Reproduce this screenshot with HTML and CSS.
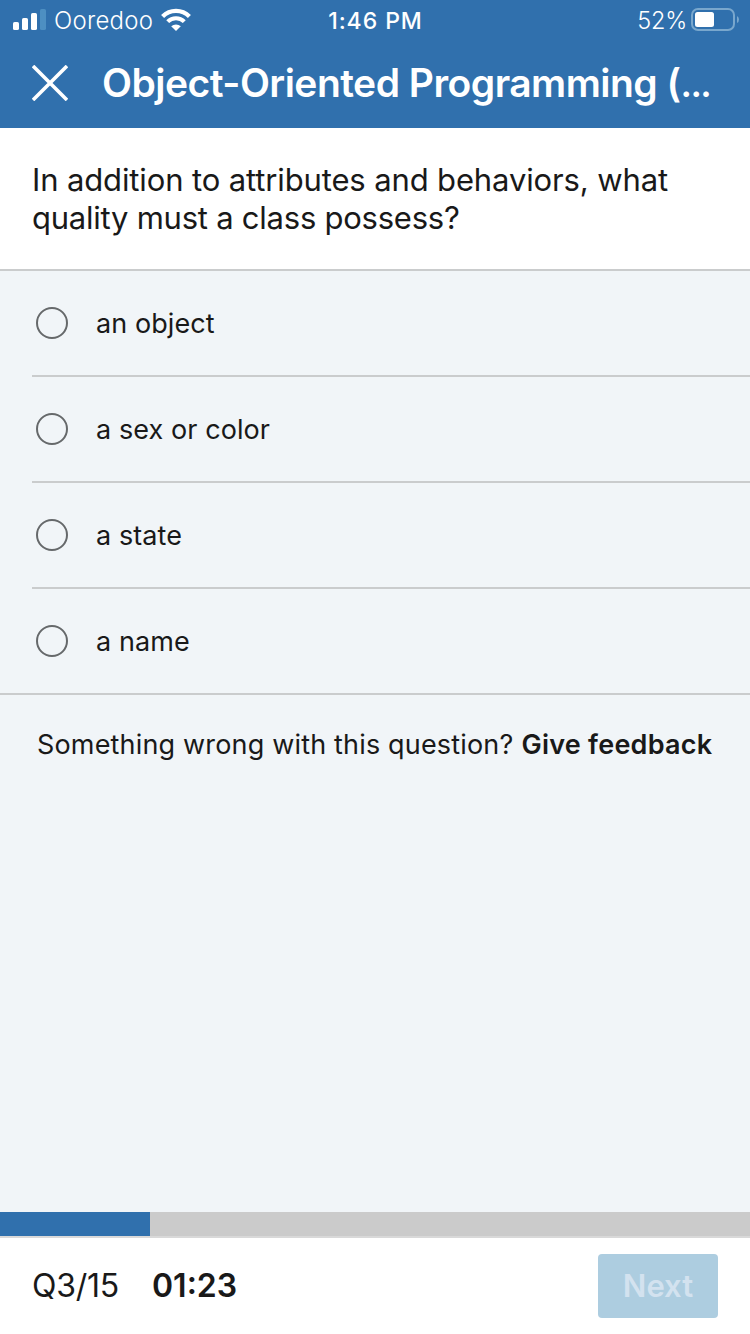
FILE: index.html
```html
<!DOCTYPE html>
<html lang="en">
<head>
<meta charset="utf-8">
<title>Quiz</title>
<link rel="stylesheet" href="styles.css">
</head>
<body>
<div class="screen">
  <header class="header">
    <div class="status">
      <div class="status-left">
        <svg class="signal" width="34" height="24" viewBox="0 0 34 24" fill="#fff">
          <rect x="0" y="14" width="6" height="8" rx="1.6"/>
          <rect x="9" y="10" width="6" height="12" rx="1.6"/>
          <rect x="18" y="5" width="6" height="17" rx="1.6"/>
          <rect x="27" y="1" width="6" height="21" rx="1.6" fill="#4d8fc2"/>
        </svg>
        <span class="carrier">Ooredoo</span>
        <svg class="wifi" width="30" height="24" viewBox="0 0 30 24">
          <path d="M1.6 8.5 A19 19 0 0 1 28.4 8.5" fill="none" stroke="#fff" stroke-width="4.3"/>
          <path d="M6.7 13.6 A11.8 11.8 0 0 1 23.3 13.6" fill="none" stroke="#fff" stroke-width="4.1"/>
          <path d="M10.2 18.3 A7 7 0 0 1 19.8 18.3 L15 23Z" fill="#fff"/>
        </svg>
      </div>
      <span class="clock">1:46 PM</span>
      <div class="status-right">
        <span class="percent">52%</span>
        <svg class="battery" width="49" height="24" viewBox="0 0 49 24">
          <rect x="1" y="1" width="42" height="21" rx="6" fill="none" stroke="#79a7cd" stroke-width="2"/>
          <rect x="4" y="4" width="19" height="15" rx="2.5" fill="#fff"/>
          <path d="M46 8 Q48 9 48 11.5 Q48 14 46 15Z" fill="#79a7cd"/>
        </svg>
      </div>
    </div>
    <div class="titlebar">
      <svg class="close" width="36" height="36" viewBox="0 0 36 36"><path d="M1 1 L35 35 M35 1 L1 35" stroke="#fff" stroke-width="3.6"/></svg>
      <h1 class="title">Object-Oriented Programming (<span class="ellipsis">...</span></h1>
    </div>
  </header>
  <section class="question">
    <p class="question-text">In addition to attributes and behaviors, what<br><span class="question-end">quality must a class possess?</span></p>
  </section>
  <ul class="options">
    <li class="option"><span class="radio"></span><span class="label">an object</span></li>
    <li class="option"><span class="radio"></span><span class="label">a sex or color</span></li>
    <li class="option"><span class="radio"></span><span class="label">a state</span></li>
    <li class="option"><span class="radio"></span><span class="label">a name</span></li>
  </ul>
  <p class="feedback"><span class="feedback-text">Something wrong with this question?</span><b class="feedback-link">Give feedback</b></p>
  <div class="progress"><div class="progress-fill"></div></div>
  <footer class="footer">
    <span class="count">Q3/15</span>
    <span class="timer">01:23</span>
    <button class="next" disabled>Next</button>
  </footer>
</div>
</body>
</html>
```

FILE: styles.css
```css
* { box-sizing: border-box; margin: 0; padding: 0; }
body { font-family: Inter, "Liberation Sans", sans-serif; color: #191919; background: #f1f5f8; }
.screen { width: 750px; height: 1334px; display: flex; flex-direction: column; overflow: hidden; white-space: nowrap; }
.header { height: 128px; background: #3070ad; color: #fff; }
.status { height: 40px; display: grid; grid-template-columns: 1fr auto 1fr; align-items: center; padding: 0 10px 0 13px; }
.status-left, .status-right { display: flex; align-items: center; }
.status-right { justify-content: flex-end; }
.carrier { width: 98px; margin-left: 7px; padding-top: 1px; font-size: 24px; letter-spacing: .25px; font-weight: 350; }
.wifi { margin-left: 9px; }
.clock { padding-top: 2px; margin-right: 2px; font-size: 23px; font-weight: 500; letter-spacing: .95px; }
.percent { padding-top: 1px; font-size: 23.5px; font-weight: 350; margin-right: 4px; letter-spacing: -.2px; }
.titlebar { height: 88px; display: flex; align-items: center; padding-left: 32px; }
.close { display: block; margin-top: -2px; }
.title { margin: -2px 0 0 34px; font-size: 39px; line-height: 48px; font-weight: 600; letter-spacing: -.52px; }
.ellipsis { font-size: 36px; letter-spacing: -1.6px; }
.question { height: 143px; background: #fff; border-bottom: 2px solid #cacccd; padding: 33px 32px 0; }
.question-text { font-size: 31px; line-height: 38px; letter-spacing: -.13px; }
.question-end { letter-spacing: -.24px; }
.options { list-style: none; border-bottom: 2px solid #cacccd; }
.option { height: 106px; margin-left: 32px; padding-left: 4px; display: flex; align-items: center; border-bottom: 2px solid #cacccd; }
.option:last-child { height: 104px; border-bottom: 0; }
.radio { width: 32px; height: 32px; border: 2px solid #66696b; border-radius: 50%; margin-right: 28px; }
.label { padding-top: 2px; font-size: 27px; line-height: 34px; letter-spacing: .08px; }
.feedback { padding: 33px 37px 0; font-size: 27px; line-height: 34px; flex: 1; display: flex; gap: 8px; }
.feedback-text { letter-spacing: .17px; }
.feedback-link { font-weight: 600; letter-spacing: .25px; }
.progress { height: 26px; background: #cbcbcb; border-bottom: 2px solid #d9d9d9; }
.progress-fill { width: 20%; height: 24px; background: #3070ad; }
.footer { height: 96px; background: #fff; display: flex; align-items: center; padding: 0 32px; font-size: 32px; }
.count { padding-bottom: 2px; letter-spacing: -.25px; }
.timer { padding-bottom: 2px; margin-left: 33px; font-weight: 600; }
.next { margin-left: auto; width: 120px; height: 64px; padding-bottom: 2px; border: 0; border-radius: 4px; background: #adcde0; color: #d3e2ef; font: 600 31px Inter, sans-serif; }
```
